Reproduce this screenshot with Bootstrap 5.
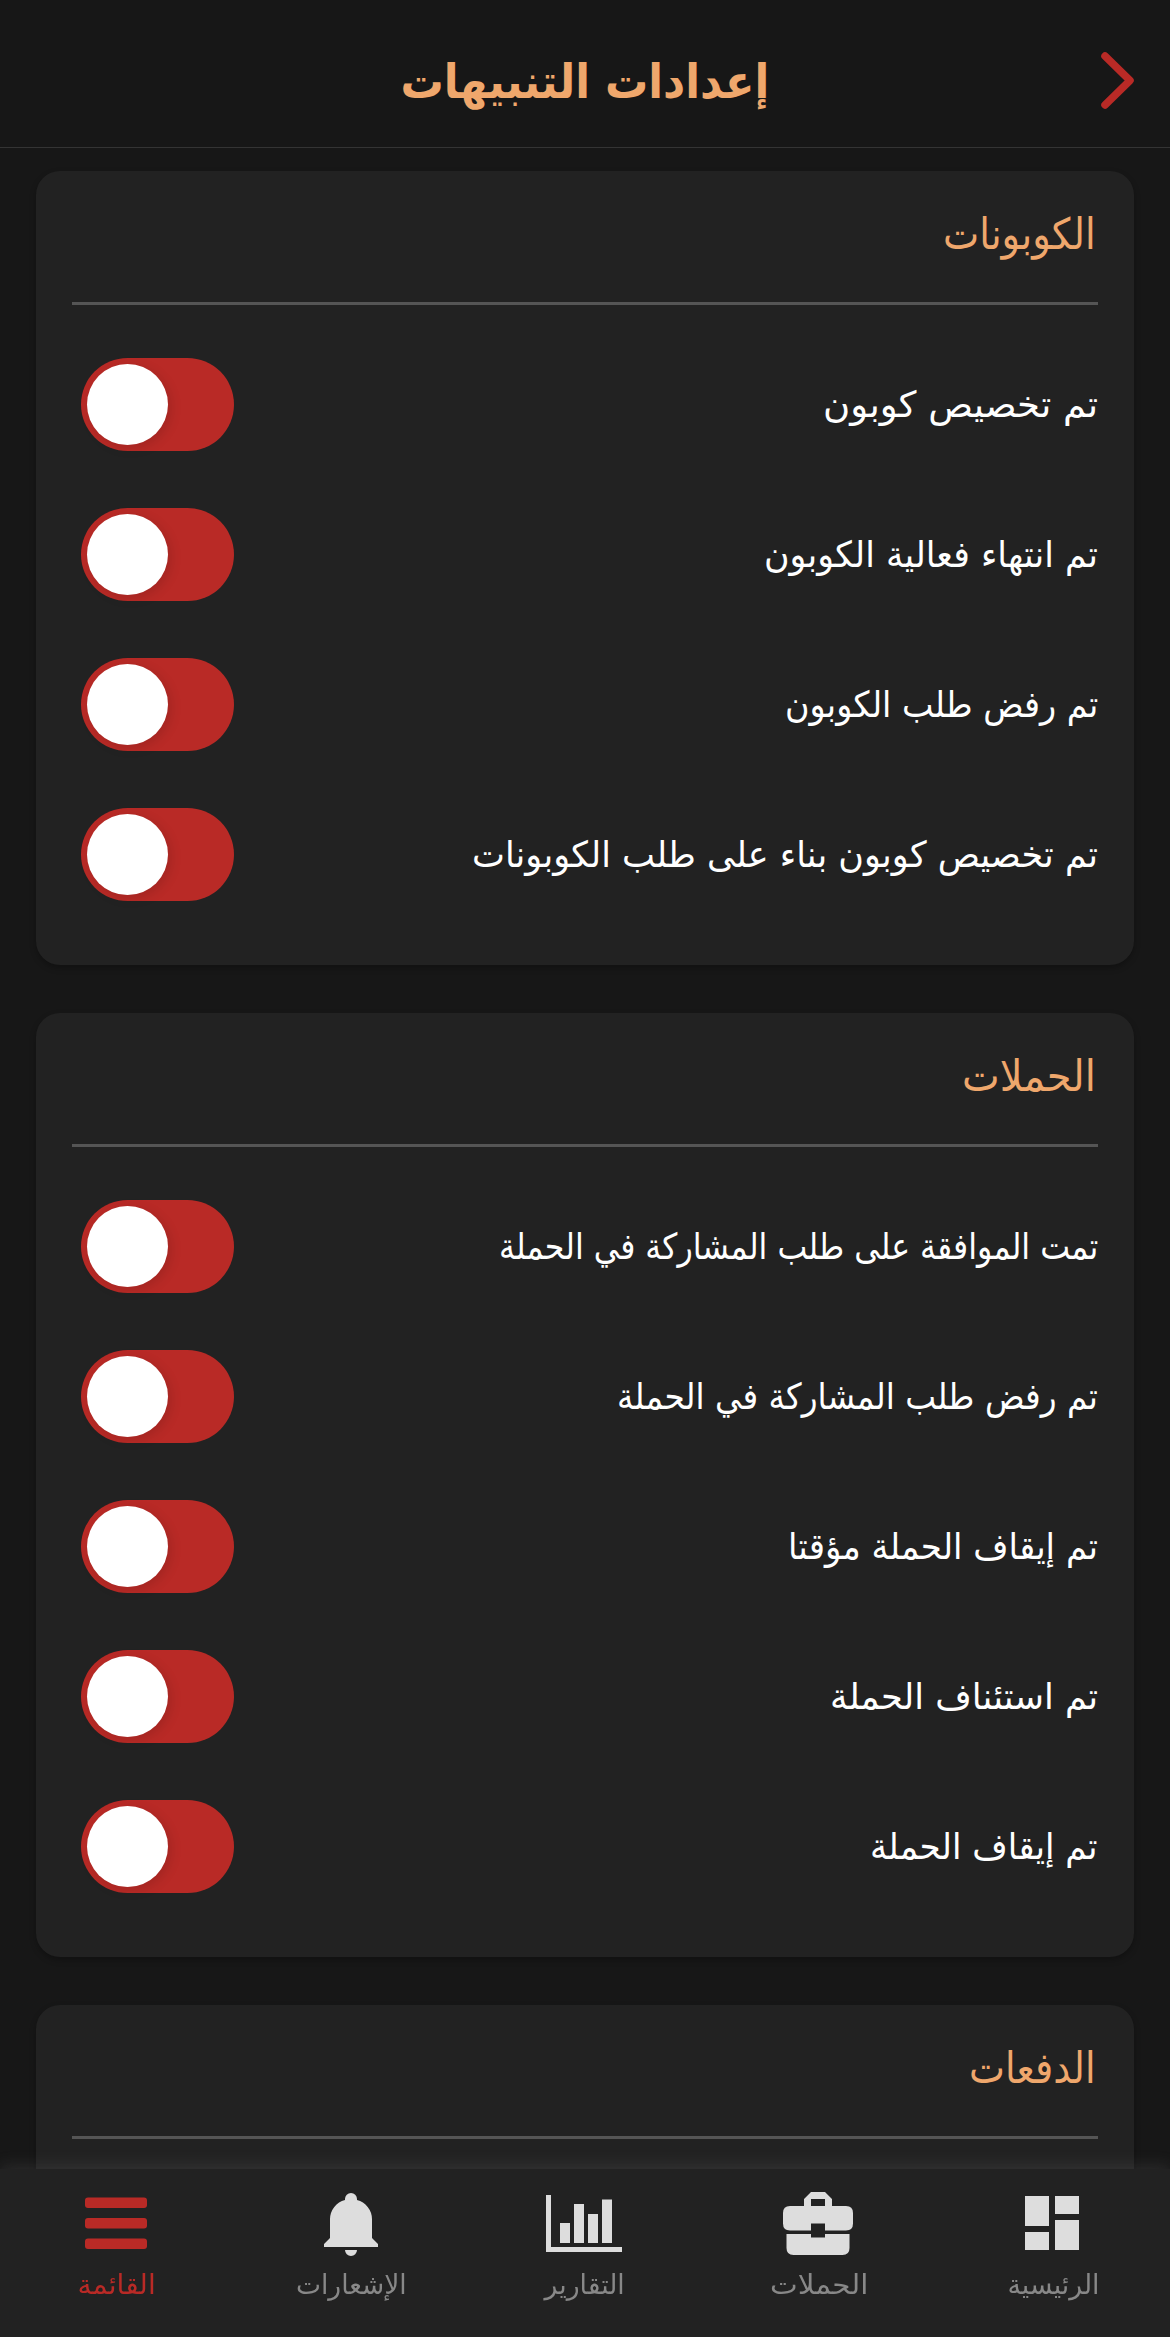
<!DOCTYPE html>
<html lang="ar" dir="rtl">
<head>
<meta charset="utf-8">
<meta name="viewport" content="width=device-width, initial-scale=1">
<title>إعدادات التنبيهات</title>
<link href="https://cdn.jsdelivr.net/npm/bootstrap@5.3.0/dist/css/bootstrap.min.css" rel="stylesheet">
<style>
  body { background: #171717; color: #fff; font-family: "DejaVu Sans", sans-serif; height: 2337px; }
  .topbar { height: 148px; padding-top: 16px; border-bottom: 1px solid #343434; }
  .topbar h1 { font-size: 47px; line-height: 60px; color: #efa76c; }
  .back { top: 50px; right: 34px; }
  .content { padding: 23px 36px 0; gap: 48px; }
  .panel { background: #222; border: 0; border-radius: 24px; padding: 0 36px 35.5px; box-shadow: 0 3px 6px rgba(0,0,0,.28); color: #fff; }
  .panel-head { height: 134px; border-bottom: 3px solid #555; margin-bottom: 24.5px; padding: 33px 2px 0; color: #efa76c; font-size: 43px; line-height: 60px; font-weight: 400; }
  .setting { height: 150px; font-size: 36px; line-height: 60px; }
  .toggle { width: 153px; height: 93px; background: #b92a26; border-radius: 47px; padding: 6px; margin-left: 9px; }
  .knob { width: 81px; height: 81px; background: #fff; box-shadow: 3px 3px 12px rgba(0,0,0,.13); }
  .tabs { height: 168px; background: #222; box-shadow: 0 -3px 15px rgba(130,130,130,.2); }
  .tab { color: #888; font-size: 27px; line-height: 36px; padding-top: 21px; gap: 8px; }
  .tab svg { width: 78px; height: 69px; fill: #ddd; }
  .tab.current { color: #b92a26; }
  .tab.current svg { fill: #b92a26; }
  .fit { display: inline-block; white-space: nowrap; transform-origin: right center; }
  .fit-mid { transform-origin: center center; }
</style>
</head>
<body class="d-flex flex-column overflow-hidden m-0">
<header class="topbar position-relative flex-shrink-0 d-flex align-items-center justify-content-center">
  <h1 class="fw-bold m-0"><span class="fit fit-mid" data-w="369">إعدادات التنبيهات</span></h1>
  <svg class="back position-absolute" width="38" height="62" viewBox="0 0 38 62" fill="none" stroke="#b92a26" stroke-width="7.500" stroke-linecap="round" stroke-linejoin="round"><path d="M7 6 32 30.500 7 55"/></svg>
</header>

<main class="content d-flex flex-column flex-grow-1 overflow-hidden">
  <section class="panel card flex-shrink-0">
    <h2 class="panel-head"><span class="fit" data-w="153">الكوبونات</span></h2>
    <div class="setting d-flex align-items-center justify-content-between"><span class="fit" data-w="275">تم تخصيص كوبون</span><div class="toggle d-flex justify-content-end"><div class="knob rounded-circle"></div></div></div>
    <div class="setting d-flex align-items-center justify-content-between"><span class="fit" data-w="334">تم انتهاء فعالية الكوبون</span><div class="toggle d-flex justify-content-end"><div class="knob rounded-circle"></div></div></div>
    <div class="setting d-flex align-items-center justify-content-between"><span class="fit" data-w="313">تم رفض طلب الكوبون</span><div class="toggle d-flex justify-content-end"><div class="knob rounded-circle"></div></div></div>
    <div class="setting d-flex align-items-center justify-content-between"><span class="fit" data-w="626">تم تخصيص كوبون بناء على طلب الكوبونات</span><div class="toggle d-flex justify-content-end"><div class="knob rounded-circle"></div></div></div>
  </section>

  <section class="panel card flex-shrink-0">
    <h2 class="panel-head"><span class="fit" data-w="134">الحملات</span></h2>
    <div class="setting d-flex align-items-center justify-content-between"><span class="fit" data-w="599">تمت الموافقة على طلب المشاركة في الحملة</span><div class="toggle d-flex justify-content-end"><div class="knob rounded-circle"></div></div></div>
    <div class="setting d-flex align-items-center justify-content-between"><span class="fit" data-w="481">تم رفض طلب المشاركة في الحملة</span><div class="toggle d-flex justify-content-end"><div class="knob rounded-circle"></div></div></div>
    <div class="setting d-flex align-items-center justify-content-between"><span class="fit" data-w="310">تم إيقاف الحملة مؤقتا</span><div class="toggle d-flex justify-content-end"><div class="knob rounded-circle"></div></div></div>
    <div class="setting d-flex align-items-center justify-content-between"><span class="fit" data-w="268">تم استئناف الحملة</span><div class="toggle d-flex justify-content-end"><div class="knob rounded-circle"></div></div></div>
    <div class="setting d-flex align-items-center justify-content-between"><span class="fit" data-w="228">تم إيقاف الحملة</span><div class="toggle d-flex justify-content-end"><div class="knob rounded-circle"></div></div></div>
  </section>

  <section class="panel card flex-shrink-0">
    <h2 class="panel-head"><span class="fit" data-w="127">الدفعات</span></h2>
  </section>
</main>

<nav class="tabs fixed-bottom d-flex">
  <div class="tab d-flex flex-column align-items-center col">
    <svg viewBox="1 0 78 69"><path d="M12 6h24v30H12zM42 6h24v18H42zM12 42h24v18H12zM42 30h24v30H42z"/></svg>
    <span class="fit fit-mid" data-w="92">الرئيسية</span>
  </div>
  <div class="tab d-flex flex-column align-items-center col">
    <svg viewBox="1 0 78 69"><path fill-rule="evenodd" d="M25 16V9l7-7h14l7 7v7h14q7 0 7 7v10.500q0 7-7 7H46V33.500H32v7H11q-7 0-7-7V23q0-7 7-7zM32 16h14V9H32z"/><path d="M7.500 44H32v3.500h14V44h24.500v14q0 7-7 7h-49q-7 0-7-7z"/></svg>
    <span class="fit fit-mid" data-w="98">الحملات</span>
  </div>
  <div class="tab d-flex flex-column align-items-center col">
    <svg viewBox="0 0 78 69"><path d="M0 5h5v52h71v5H0zM14 33h10v20H14zM28 14h10v39H28zM42 24h10v29H42zM56 9.500h10V53H56z"/></svg>
    <span class="fit fit-mid" data-w="80">التقارير</span>
  </div>
  <div class="tab d-flex flex-column align-items-center col">
    <svg viewBox="0 0 78 69"><path d="M33 10V9a6 6 0 0 1 12 0v1A20 20 0 0 1 60 29v19l6 6v3H12v-3l6-6V29A20 20 0 0 1 33 10zM33 60h12a6 6 0 0 1-12 0z"/></svg>
    <span class="fit fit-mid" data-w="111">الإشعارات</span>
  </div>
  <div class="tab current d-flex flex-column align-items-center col">
    <svg viewBox="0 0 78 69"><rect x="7" y="7.500" width="62" height="10.500" rx="3"/><rect x="7" y="28" width="62" height="10.500" rx="3"/><rect x="7" y="48.500" width="62" height="10.500" rx="3"/></svg>
    <span class="fit fit-mid" data-w="78">القائمة</span>
  </div>
</nav>
<script src="https://cdn.jsdelivr.net/npm/bootstrap@5.3.0/dist/js/bootstrap.bundle.min.js"></script>
<script>
  // Narrow or widen each label to its designed width
  document.querySelectorAll('.fit').forEach(el => {
    el.style.transform = `scaleX(${el.dataset.w / el.offsetWidth})`;
  });
</script>
</body>
</html>
